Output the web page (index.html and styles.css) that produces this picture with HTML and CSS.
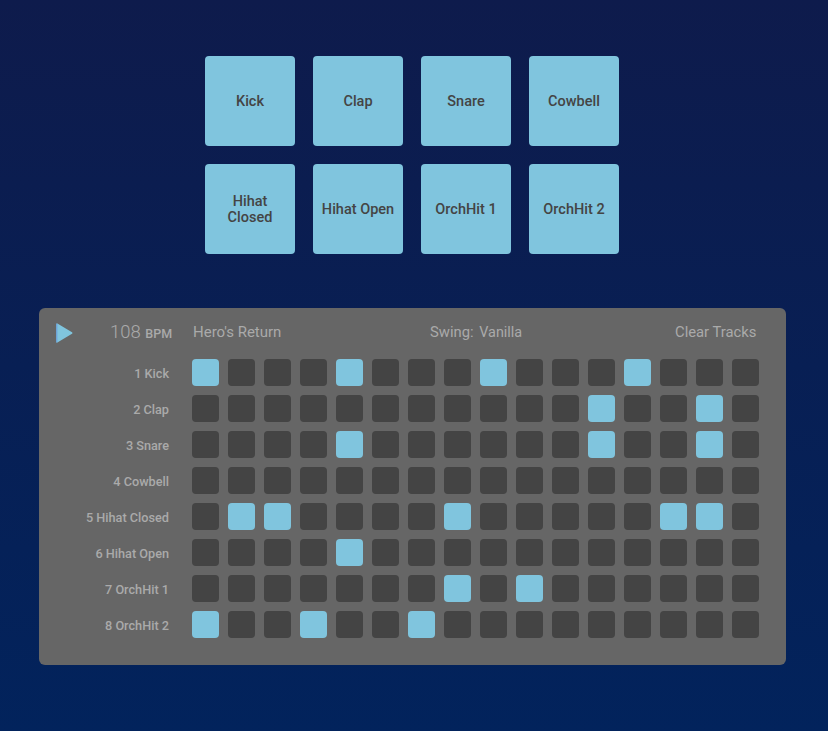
FILE: index.html
```html
<!DOCTYPE html>
<html lang="en">
<head>
    <meta charset="UTF-8">
    <meta name="viewport" content="width=device-width, initial-scale=1.0">
    <title>Drum Machine</title>
    <link rel="stylesheet" href="styles.css">
</head>
<body>
    <div class="pads">
        <button class="pad">Kick</button>
        <button class="pad">Clap</button>
        <button class="pad">Snare</button>
        <button class="pad">Cowbell</button>
        <button class="pad">Hihat Closed</button>
        <button class="pad">Hihat Open</button>
        <button class="pad">OrchHit 1</button>
        <button class="pad">OrchHit 2</button>
    </div>

    <div class="panel">
        <div class="controls">
            <svg class="play" width="18" height="20" viewBox="0 0 18 20">
                <path d="M2 1.2 L16.6 10 L2 18.8 Z" fill="#80c5de" stroke="#80c5de" stroke-width="1.6" stroke-linejoin="round"/>
                <path d="M1.7 1.2 V18.8" fill="none" stroke="#6ea3d6" stroke-width="1.4" stroke-linecap="round"/>
            </svg>
            <div class="tempo">108 <span class="bpm">BPM</span></div>
            <div class="song">Hero's Return</div>
            <div class="swing"><span>Swing:</span> <span class="swing-name">Vanilla</span></div>
            <div class="clear">Clear Tracks</div>
        </div>
        <div class="tracks" id="tracks"></div>
    </div>

    <script>
        const tracks = [
            ["1 Kick", [0, 4, 8, 12]],
            ["2 Clap", [11, 14]],
            ["3 Snare", [4, 11, 14]],
            ["4 Cowbell", []],
            ["5 Hihat Closed", [1, 2, 7, 13, 14]],
            ["6 Hihat Open", [4]],
            ["7 OrchHit 1", [7, 9]],
            ["8 OrchHit 2", [0, 3, 6]]
        ];
        const container = document.getElementById("tracks");

        tracks.forEach(([name, steps]) => {
            const label = document.createElement("div");
            label.className = "track-name";
            label.textContent = name;
            container.appendChild(label);

            for (let i = 0; i < 16; i++) {
                const step = document.createElement("div");
                step.className = steps.includes(i) ? "step on" : "step";
                container.appendChild(step);
            }
        });
    </script>
</body>
</html>
```

FILE: styles.css
```css
html {
    height: 100%;
}
body {
    margin: 0;
    min-height: 731px;
    box-sizing: border-box;
    padding-top: 56px;
    background: linear-gradient(#0e1b4c, #02235c);
    font-family: Roboto, "Liberation Sans", sans-serif;
    overflow: hidden;
}
.pads {
    display: grid;
    grid-template-columns: repeat(4, 90px);
    grid-auto-rows: 90px;
    gap: 18px;
    margin-left: 205px;
}
.pad {
    padding: 2px 4px 0;
    border: 0;
    border-radius: 4px;
    background-color: #80c5de;
    color: #444;
    font-family: inherit;
    font-size: 14.5px;
    font-weight: 500;
    line-height: 16px;
}
.panel {
    box-sizing: border-box;
    width: 747px;
    height: 357px;
    margin: 54px 0 0 39px;
    border-radius: 6px;
    background-color: #666;
    color: #aaa;
}
.controls {
    display: flex;
    align-items: center;
    height: 47px;
    padding-bottom: 4px;
    font-size: 14.8px;
}
.play {
    margin: 2px 0 0 16px;
    flex: none;
}
.tempo {
    width: 61px;
    margin-left: 37px;
    font-size: 18.5px;
    font-weight: 300;
    white-space: nowrap;
}
.bpm {
    font-size: 12.5px;
    font-weight: 500;
}
.song {
    width: 237px;
    margin-left: 22px;
    font-size: 15px;
}
.swing {
    width: 245px;
}
.swing-name {
    margin-left: 2px;
    font-size: 14.4px;
}
.tracks {
    display: grid;
    grid-template-columns: 144px repeat(16, 27px);
    grid-auto-rows: 27px;
    gap: 9px;
}
.track-name {
    align-self: center;
    padding: 2px 14px 0 0;
    text-align: right;
    font-size: 12.7px;
    font-weight: 500;
    white-space: nowrap;
}
.step {
    border-radius: 4px;
    background-color: #444;
}
.step.on {
    background-color: #80c5de;
}
```
